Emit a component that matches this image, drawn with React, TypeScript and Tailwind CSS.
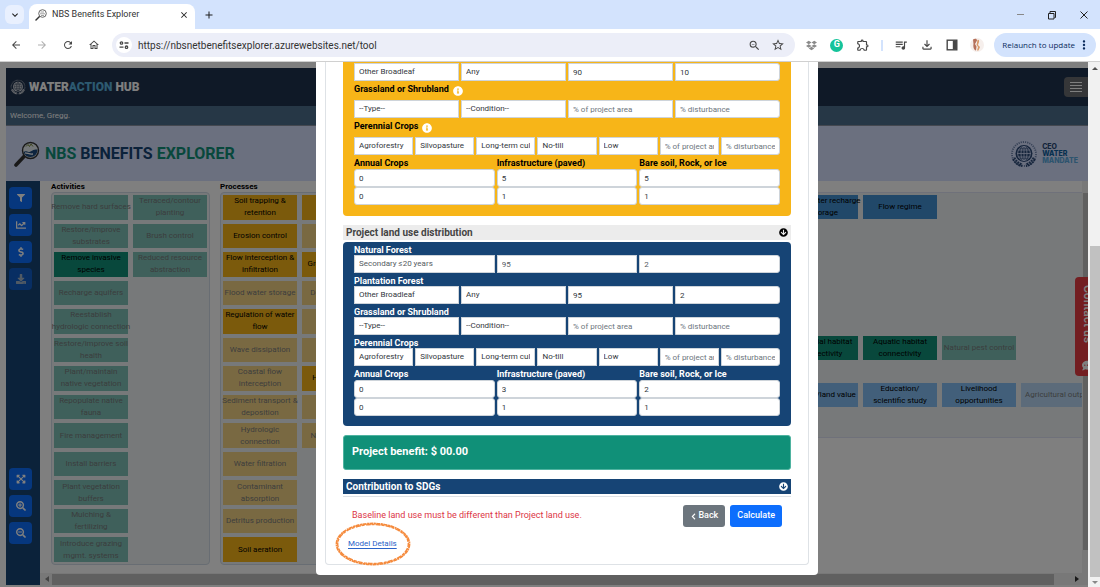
import type { ReactNode } from "react";
import clsx from "clsx";
import {
  FaArrowCircleDown,
  FaChartLine,
  FaChevronLeft,
  FaCommentDots,
  FaDollarSign,
  FaDownload,
  FaDropbox,
  FaExpandArrowsAlt,
  FaFilter,
  FaInfoCircle,
  FaSearchMinus,
  FaSearchPlus,
} from "react-icons/fa";
import {
  MdAdd,
  MdArrowBack,
  MdArrowForward,
  MdClose,
  MdExpandMore,
  MdMoreVert,
  MdOutlineExtension,
  MdOutlineFileDownload,
  MdOutlineHome,
  MdOutlineQueueMusic,
  MdRefresh,
  MdStarBorder,
  MdZoomOut,
} from "react-icons/md";

type Tone = "green" | "yellow" | "blue" | "sky";
type Tile = { text: string; on?: boolean };

const on = (text: string): Tile => ({ text, on: true });
const off = (text: string): Tile => ({ text });

const ACTIVITIES: Tile[] = [
  off("Remove hard surfaces"),
  off("Restore/improve\nsubstrates"),
  on("Remove invasive\nspecies"),
  off("Recharge aquifers"),
  off("Reestablish\nhydrologic connection"),
  off("Restore/improve soil\nhealth"),
  off("Plant/maintain\nnative vegetation"),
  off("Repopulate native\nfauna"),
  off("Fire management"),
  off("Install barriers"),
  off("Plant vegetation\nbuffers"),
  off("Mulching &\nfertilizing"),
  off("Introduce grazing\nmgmt. systems"),
  off("Terraced/contour\nplanting"),
  off("Brush control"),
  off("Reduced resource\nabstraction"),
];

const PROCESSES: Tile[] = [
  on("Soil trapping &\nretention"),
  on("Erosion control"),
  on("Flow interception &\ninfiltration"),
  off("Flood water storage"),
  on("Regulation of water\nflow"),
  off("Wave dissipation"),
  off("Coastal flow\ninterception"),
  off("Sediment transport &\ndeposition"),
  off("Hydrologic\nconnection"),
  off("Water filtration"),
  off("Contaminant\nabsorption"),
  off("Detritus production"),
  on("Soil aeration"),
  on("Nutrient flow"),
  off("Predation"),
  on("Groundwater flow"),
  off("Debris transport"),
  off("Heat transfer"),
  off("Pollination"),
  on("Habitat access"),
  off("Filtration"),
  off("Native dispersal"),
];

const toneClass: Record<Tone, string> = {
  green: "bg-[#109078]",
  yellow: "bg-[#f7b518]",
  blue: "bg-[#4290d2]",
  sky: "bg-[#84bef4]",
};

const TileBox = ({ tile, tone }: { tile: Tile; tone: Tone }) => (
  <button
    className={clsx(
      "flex min-h-0 w-[74px] items-center justify-center text-center text-[8px] leading-[12px] whitespace-pre text-black",
      toneClass[tone],
      !tile.on && "opacity-50",
    )}
  >
    {tile.text}
  </button>
);

const Panel = ({
  title,
  tiles,
  tone,
  className,
}: {
  title: string;
  tiles: Tile[];
  tone: Tone;
  className?: string;
}) => (
  <section className={clsx("flex shrink-0 flex-col", className)}>
    <h2 className="h-[11px] text-[8px] leading-[12px] font-bold">{title}</h2>
    <div className="grid flex-1 auto-cols-[74px] grid-flow-col grid-rows-[repeat(13,minmax(0,1fr))] gap-x-[5px] gap-y-1 rounded-sm border border-[#d0dae6] bg-[#eff2f5] p-[2px]">
      {tiles.map((tile) => (
        <TileBox key={tile.text} tile={tile} tone={tone} />
      ))}
    </div>
  </section>
);

const OutcomeRow = ({ tiles, tone }: { tiles: Tile[]; tone: Tone }) => (
  <div className="flex h-6 gap-[5px]">
    {tiles.map((tile) => (
      <TileBox key={tile.text} tile={tile} tone={tone} />
    ))}
  </div>
);

const Magnifier = ({ className }: { className?: string }) => (
  <svg viewBox="0 0 26 26" className={className} aria-hidden="true">
    <path d="M2 24 10 15.5" stroke="#333" strokeWidth="3.6" strokeLinecap="round" />
    <circle cx="16.5" cy="9.5" r="8" fill="#e8eef2" stroke="#333" strokeWidth="1.4" />
    <path
      d="M9.5 11c3-2 4 1 7-.6 3-1.600 4-2.400 7-1.800 0 4.500-3 7.400-7 7.400-3.500 0-6-2-7-5z"
      fill="#1c4a80"
    />
    <path d="M11 11.800c3 0 4 1.800 8 1.200" stroke="#fff" fill="none" strokeWidth="1.300" />
    <path d="M12 5.500 14 3.500 15.500 5.500 17 3 19 5.500" stroke="#7a8a40" fill="none" />
  </svg>
);

// small variant of the magnifier used as the tab's favicon
const Favicon = () => (
  <svg viewBox="0 0 12 12" className="size-3" fill="none" aria-hidden="true">
    <path d="M1 11 4.500 7.500" stroke="#333" strokeWidth="1.500" strokeLinecap="round" />
    <circle cx="7.500" cy="4.500" r="3.800" fill="#fff" stroke="#555" strokeWidth=".9" />
    <path d="M5.500 3h3.500M5 4.800h5M6 6.500h3" stroke="#888" strokeWidth=".8" />
  </svg>
);

const Globe = ({ className, color, line }: { className?: string; color: string; line: string }) => (
  <svg viewBox="0 0 28 28" className={className} aria-hidden="true">
    <g fill="none" stroke={color}>
      <circle cx="14" cy="14" r="12" strokeWidth="1.800" strokeDasharray="1.200 1" opacity=".6" />
      <path
        d="M3 19c2 4 5 6.500 9 7M25 19c-2 4-5 6.500-9 7M4.500 17.500c1.500 3.500 4 5.800 8 7M23.500 17.500c-1.500 3.500-4 5.800-8 7"
        strokeWidth="1.800"
        strokeDasharray="2 .7"
      />
    </g>
    <circle cx="14" cy="13.500" r="8.500" fill={color} />
    <g fill="none" stroke={line} strokeWidth=".8">
      <ellipse cx="14" cy="13.500" rx="3" ry="7" />
      <ellipse cx="14" cy="13.500" rx="6.400" ry="7" />
      <path d="M14 6v15M7 13.500h14M8 10h12M8 17h12" />
    </g>
  </svg>
);

const BrowserChrome = () => (
  <header className="shrink-0">
    <div className="flex h-[29px] items-end bg-[#d3e3fd] text-[#1f1f1f]">
      <button
        aria-label="Search tabs"
        className="mb-[5px] ml-[5px] flex size-[19px] items-center justify-center rounded-md bg-[#e9f0fe]"
      >
        <MdExpandMore className="size-3" />
      </button>
      <div className="ml-[5px] flex h-[25px] w-[166px] items-center rounded-t-lg bg-white pr-[6px] pb-[3px] pl-[6px]">
        <Favicon />
        <span className="ml-[5px] flex-1 text-[9px] text-[#333]">NBS Benefits Explorer</span>
        <button aria-label="Close tab">
          <MdClose className="size-[10px]" />
        </button>
      </div>
      <button aria-label="New tab" className="mb-2 ml-2">
        <MdAdd className="size-3" />
      </button>
      <div className="ml-auto flex h-full items-center gap-[22px] pr-[11px]">
        <button aria-label="Minimize" className="flex w-[10px] justify-center">
          <span className="block h-px w-[7px] bg-[#888]" />
        </button>
        <button aria-label="Restore">
          <svg viewBox="0 0 10 10" className="size-[10px]" fill="none" stroke="#222">
            <path d="M1.500 3.500h5.500v5.500h-5.500zM3 3V1.500h5.500v6H7.500" />
          </svg>
        </button>
        <button aria-label="Close window">
          <svg viewBox="0 0 10 10" className="size-[10px]" stroke="#222">
            <path d="M1.500 1.500l7 7M8.500 1.500l-7 7" />
          </svg>
        </button>
      </div>
    </div>
    <div className="flex h-[33px] items-center border-b border-[#d0d0d0] bg-white pr-1 pl-[10px] text-[#474747]">
      <div className="flex gap-[14px]">
        <button aria-label="Back one page">
          <MdArrowBack className="size-3" />
        </button>
        <button aria-label="Forward" className="text-[#b0b0b0]">
          <MdArrowForward className="size-3" />
        </button>
        <button aria-label="Reload">
          <MdRefresh className="size-3" />
        </button>
        <button aria-label="Home">
          <MdOutlineHome className="size-3" />
        </button>
      </div>
      <div className="ml-[12px] flex h-6 min-w-0 flex-1 items-center rounded-full bg-[#eceef8] pr-[10px] pl-1">
        <span className="flex size-4 shrink-0 items-center justify-center rounded-full bg-white">
          <svg viewBox="0 0 10 10" className="size-[10px]" fill="none" stroke="#474747" strokeWidth="1.300">
            <circle cx="2.500" cy="3" r="1.200" />
            <path d="M5.500 3h4M.5 7.200h4" />
            <circle cx="7.500" cy="7.200" r="1.200" />
          </svg>
        </span>
        <input
          aria-label="Address"
          defaultValue="https://nbsnetbenefitsexplorer.azurewebsites.net/tool"
          className="ml-[6px] min-w-0 flex-1 bg-transparent text-[10px] text-[#333] outline-none"
        />
        <MdZoomOut className="size-[13px]" />
        <MdStarBorder className="ml-[10px] size-[14px]" />
      </div>
      <div className="ml-[11px] flex items-center gap-[13px]">
        <FaDropbox className="size-[11px] text-[#8a8a8a]" />
        <span className="flex size-[13px] items-center justify-center rounded-full bg-[#15c39a] text-[9px] font-bold text-white">
          G
        </span>
        <MdOutlineExtension className="size-[14px]" />
      </div>
      <span className="mx-[11px] h-[11px] w-[2px] bg-[#d3e3fd]" />
      <div className="flex items-center gap-3">
        <MdOutlineQueueMusic className="size-[14px]" />
        <MdOutlineFileDownload className="size-[14px]" />
        <svg viewBox="0 0 12 12" className="size-3">
          <rect x="1.200" y="1.200" width="9.600" height="9.600" fill="none" stroke="#474747" strokeWidth="1.400" />
          <path d="M6.800 1.500h4v9h-4z" fill="#474747" />
        </svg>
        <svg viewBox="0 0 14 14" className="size-[14px]">
          <circle cx="7" cy="7" r="7" fill="#f6efec" />
          <path d="M3 1.500c2-1.500 4-1 4 1L5 6l1.500 2.500L6 12.500C3.500 12 3 8 3.500 6z" fill="#b5705a" />
          <path d="M7.500 2c1-.5 2 0 1.500 2L8 7l2 2-1.500 3.500H7L8 9 6.500 7z" fill="#d99a6a" />
        </svg>
      </div>
      <button className="ml-[10px] flex h-6 items-center rounded-full bg-[#d3e3fd] pr-[5px] pl-2 font-['Open_Sans',sans-serif] text-[8px] whitespace-nowrap text-[#0a2a5c]">
        Relaunch to update
        <MdMoreVert className="ml-[2px] size-[14px]" />
      </button>
    </div>
  </header>
);

const SideButton = ({ label, children }: { label: string; children: ReactNode }) => (
  <button
    aria-label={label}
    className="flex h-[22px] w-[23px] items-center justify-center rounded-sm bg-[#0d6efd] text-[10px] text-white"
  >
    {children}
  </button>
);

const Workspace = () => (
  <div className="flex h-full flex-col bg-white p-[6px] pr-0 pb-[2px]">
    <div className="flex h-[38px] shrink-0 items-center justify-between bg-[#1e324e] pl-1">
      <div className="flex items-center gap-[3px] text-[12px] font-black text-white">
        <Globe className="size-4" color="#e4e6ea" line="#1e324e" />
        <span>
          WATER<span className="text-[#5ab4e0]">ACTION</span> HUB
        </span>
      </div>
      <button aria-label="Menu" className="flex h-5 w-6 items-center justify-center rounded-l-sm bg-[#6a6c70]">
        <svg viewBox="0 0 12 10" className="h-[10px] w-3" stroke="#fff">
          <path d="M0 .5h12M0 3.500h12M0 6.500h12M0 9.500h12" />
        </svg>
      </button>
    </div>
    <div className="h-[19px] shrink-0 bg-[#4c6e8c] pl-1 text-[8px] leading-[19px] text-white">
      Welcome, Gregg.
    </div>
    <div className="flex h-14 shrink-0 items-center justify-between border-t border-[#8890a0] bg-[#d6e0ff] pr-[10px] pl-2">
      <div className="flex items-center gap-[5px] text-[16px] font-bold">
        <Magnifier className="size-[26px]" />
        <h1 className="text-[#109078]">
          NBS <span className="text-[#164475]">BENEFITS</span> EXPLORER
        </h1>
      </div>
      <div className="flex items-center gap-1 font-['Inter',sans-serif] text-[7px] leading-[7px] font-extrabold">
        <Globe className="size-7" color="#2c4a78" line="#d6e0ff" />
        <p className="text-[#2c4a78]">
          CEO
          <br />
          <span className="text-[#0e5f9e]">WATER</span>
          <br />
          <span className="text-[#5aa8dc]">MANDATE</span>
        </p>
      </div>
    </div>

    <div className="flex min-h-0 flex-1">
      <nav className="flex w-[34px] shrink-0 flex-col justify-between bg-[#164475] px-[3px] pt-[6px] pb-[41px]">
        <div className="flex flex-col gap-[5px]">
          <SideButton label="Filter">
            <FaFilter className="size-2" />
          </SideButton>
          <SideButton label="Charts">
            <FaChartLine />
          </SideButton>
          <SideButton label="Benefits">
            <FaDollarSign />
          </SideButton>
          <div className="opacity-60">
            <SideButton label="Download">
              <FaDownload />
            </SideButton>
          </div>
        </div>
        <div className="flex flex-col gap-[5px]">
          <SideButton label="Fit to screen">
            <FaExpandArrowsAlt />
          </SideButton>
          <SideButton label="Zoom in">
            <FaSearchPlus />
          </SideButton>
          <SideButton label="Zoom out">
            <FaSearchMinus />
          </SideButton>
        </div>
      </nav>
      <div className="flex min-w-0 flex-1 flex-col">
        <div className="flex min-h-0 flex-1">
          <div className="flex min-w-0 flex-1 items-stretch overflow-hidden pb-[8px] pl-[11px]">
            <Panel title="Activities" tiles={ACTIVITIES} tone="green" className="mr-[10px]" />
            <Panel title="Processes" tiles={PROCESSES} tone="yellow" />
            <div className="mt-[11px] -mr-[16px] ml-auto flex h-[246px] shrink-0 flex-col border border-[#dfe3f4] bg-[#eff2f5] p-[2px]">
              <OutcomeRow tone="blue" tiles={[on("Groundwater recharge\n& storage"), on("Flow regime")]} />
              <div className="mt-[117px]">
                <OutcomeRow
                  tone="green"
                  tiles={[
                    on("Terrestrial habitat\nconnectivity"),
                    on("Aquatic habitat\nconnectivity"),
                    off("Natural pest control"),
                  ]}
                />
              </div>
              <div className="mt-[23px]">
                <OutcomeRow
                  tone="sky"
                  tiles={[
                    on("Property/land value"),
                    on("Education/\nscientific study"),
                    on("Livelihood\nopportunities"),
                    off("Agricultural output"),
                  ]}
                />
              </div>
            </div>
          </div>
          <div className="flex w-[6px] flex-col items-center overflow-hidden bg-[#f1f1f1] pt-3 pb-[23px]">
            <div className="w-[5px] flex-1 self-end bg-[#c1c1c1]" />
          </div>
        </div>
        <div className="flex h-3 shrink-0 items-center bg-[#f1f1f1] pr-[9px] pl-[5px]">
          <svg viewBox="0 0 4 6" className="h-[6px] w-1" fill="#888">
            <path d="M4 0v6L0 3z" />
          </svg>
          <div className="mr-[21px] ml-[3px] h-[11px] flex-1 bg-[#c1c1c1]" />
          <svg viewBox="0 0 4 6" className="h-[6px] w-1" fill="#333">
            <path d="M0 0v6l4-3z" />
          </svg>
        </div>
      </div>
    </div>
  </div>
);

type Field = { name: string; value?: string; hint?: string; options?: boolean; soft?: boolean };

const FieldRow = ({ fields, group, cols }: { fields: Field[]; group: string; cols: string }) => (
  <div className={clsx("grid gap-[2px]", cols)}>
    {fields.map((field, i) => {
      const label = `${group} ${field.name}`;
      const style = clsx(
        "h-[18px] w-full min-w-0 appearance-none border border-[#ced4da] bg-white px-1 text-[8px] outline-none placeholder:text-[#6c757d] placeholder:opacity-100",
        field.soft ? "text-[#555b61]" : "text-[#32373c]",
        i === fields.length - 1 && "rounded-r-[3px]",
      );
      return field.options ? (
        <select key={label} aria-label={label} className={style}>
          <option>{field.value}</option>
        </select>
      ) : (
        <input
          key={label}
          aria-label={label}
          defaultValue={field.value}
          placeholder={field.hint}
          className={style}
        />
      );
    })}
  </div>
);

const GroupLabel = ({ children, info }: { children: string; info?: boolean }) => (
  <div
    className={clsx(
      "flex text-[9px] font-bold",
      info ? "h-[19px] gap-1 leading-[17px]" : "h-[13px] leading-[16px]",
    )}
  >
    <span>{children}</span>
    {info && <FaInfoCircle className="mt-[5px] size-[10px] text-white" />}
  </div>
);

const plantation = (area: string, disturbance: string): Field[] => [
  { name: "type", value: "Other Broadleaf", options: true },
  { name: "condition", value: "Any", options: true },
  { name: "area", value: area },
  { name: "disturbance", value: disturbance },
];

const GRASSLAND: Field[] = [
  { name: "type", value: "--Type--", options: true },
  { name: "condition", value: "--Condition--", options: true },
  { name: "area", hint: "% of project area" },
  { name: "disturbance", hint: "% disturbance" },
];

const PERENNIAL: Field[] = [
  { name: "system", value: "Agroforestry", options: true },
  { name: "practice", value: "Silvopasture", options: true },
  { name: "duration", value: "Long-term cultivated", options: true },
  { name: "tillage", value: "No-till", options: true },
  { name: "input", value: "Low", options: true },
  { name: "area", hint: "% of project area" },
  { name: "disturbance", hint: "% disturbance" },
];

const OTHER_USES = ["Annual Crops", "Infrastructure (paved)", "Bare soil, Rock, or Ice"];

const OtherUses = ({ id, values }: { id: string; values: string[][] }) => (
  <div className="grid grid-cols-3 gap-x-[2px]">
    {OTHER_USES.map((name, col) => (
      <div key={name} className="flex flex-col">
        <label htmlFor={`${id}-${col}`} className="h-[14px] text-[9px] leading-[16px] font-bold">
          {name}
        </label>
        {values[col].map((value, row) => (
          <input
            key={row}
            id={row === 0 ? `${id}-${col}` : undefined}
            aria-label={row === 0 ? undefined : `${name} disturbance`}
            defaultValue={value}
            className="h-[18px] w-full rounded-[3px] border border-[#ced4da] bg-white px-1 text-[8px] text-[#32373c] outline-none"
          />
        ))}
      </div>
    ))}
  </div>
);

const LandUseModal = () => (
  <div role="dialog" aria-label="Land use" className="w-full max-w-[502px] self-start rounded-b bg-white px-[9px] pb-[10px]">
    <div className="rounded-b border border-t-0 border-[#dee2e6] px-[17px]">
      <div className="rounded-b bg-[#f7b518] px-[11px] pt-px pb-[11px] text-black">
        <FieldRow group="Baseline plantation" cols="grid-cols-4" fields={plantation("90", "10")} />
        <GroupLabel info>Grassland or Shrubland</GroupLabel>
        <FieldRow group="Baseline grassland" cols="grid-cols-4" fields={GRASSLAND} />
        <GroupLabel info>Perennial Crops</GroupLabel>
        <FieldRow group="Baseline perennial" cols="grid-cols-7" fields={PERENNIAL} />
        <OtherUses
          id="baseline"
          values={[
            ["0", "0"],
            ["5", "1"],
            ["5", "1"],
          ]}
        />
      </div>

      <h3 className="mt-[9px] flex h-[15px] items-center justify-between bg-[#ececec] px-[3px] text-[10px] font-bold text-[#444]">
        Project land use distribution
        <FaArrowCircleDown className="size-[9px] text-black" />
      </h3>

      <div className="mt-[2px] rounded bg-[#164475] px-[11px] pb-[10px] text-white">
        <GroupLabel>Natural Forest</GroupLabel>
        <FieldRow
          group="Project natural forest"
          cols="grid-cols-3"
          fields={[
            { name: "type", value: "Secondary ≤20 years", options: true, soft: true },
            { name: "area", value: "95", soft: true },
            { name: "disturbance", value: "2", soft: true },
          ]}
        />
        <GroupLabel>Plantation Forest</GroupLabel>
        <FieldRow group="Project plantation" cols="grid-cols-4" fields={plantation("95", "2")} />
        <GroupLabel>Grassland or Shrubland</GroupLabel>
        <FieldRow group="Project grassland" cols="grid-cols-4" fields={GRASSLAND} />
        <GroupLabel>Perennial Crops</GroupLabel>
        <FieldRow group="Project perennial" cols="grid-cols-7" fields={PERENNIAL} />
        <OtherUses
          id="project"
          values={[
            ["0", "0"],
            ["3", "1"],
            ["2", "1"],
          ]}
        />
      </div>

      <div className="mt-[9px] flex h-[35px] items-center rounded-[3px] border border-[#4fb3a0] bg-[#109078] px-2 text-[11px] font-bold text-white">
        Project benefit: $ 00.00
      </div>

      <h3 className="mt-[9px] flex h-[15px] items-center justify-between bg-[#164475] px-[3px] text-[10px] font-bold text-white">
        Contribution to SDGs
        <FaArrowCircleDown className="size-[9px]" />
      </h3>
      <hr className="mt-[2px] border-[#dee2e6]" />

      <div className="mt-2 flex items-center px-[9px]">
        <p className="flex-1 text-[9px] text-[#dc3545]">
          Baseline land use must be different than Project land use.
        </p>
        <button className="flex h-[22px] items-center gap-px rounded-[3px] bg-[#6c757d] px-[7px] text-[9px] font-medium text-white">
          <FaChevronLeft className="size-[7px]" />
          Back
        </button>
        <button className="ml-[5px] h-[22px] rounded-[3px] bg-[#0d6efd] px-[7px] text-[9px] font-medium text-white">
          Calculate
        </button>
      </div>
      <div className="mt-[10px] pb-[14px] pl-[5px] text-[8px] leading-[13px]">
        <div className="relative inline-block">
          <a href="#model-details" className="text-[#2a62c8] underline underline-offset-2">
            Model Details
          </a>
          <svg
            viewBox="0 0 76 44"
            fill="none"
            stroke="#f58a3c"
            className="pointer-events-none absolute -top-[15px] -left-[13px] h-11 w-[76px] max-w-none"
          >
            <ellipse cx="38" cy="22" rx="36.500" ry="20.500" strokeWidth="1.800" strokeDasharray="4 .6 2 .4" />
            <ellipse cx="38" cy="22" rx="35.300" ry="19.500" strokeWidth="1.400" strokeDasharray="3 1.200 5 .8" />
          </svg>
        </div>
      </div>
    </div>
  </div>
);

const App = () => (
  <div className="flex h-screen flex-col overflow-hidden font-['Roboto',sans-serif] text-black">
    <BrowserChrome />
    <main className="flex min-h-0 flex-1">
      <div className="relative min-w-0 flex-1 overflow-hidden">
        <Workspace />
        <button className="absolute top-[215px] -right-[12px] flex h-[99px] w-[25px] items-center justify-between rounded-l-sm bg-[#e63c42] pt-[8px] pb-[5px] text-[12px] font-medium text-white [writing-mode:vertical-rl]">
          Contact us
          <FaCommentDots className="size-[11px]" />
        </button>
        <div className="absolute inset-0 flex justify-center bg-black/50 pl-[46px]">
          <LandUseModal />
        </div>
      </div>
      <div className="flex w-3 shrink-0 flex-col items-center justify-between bg-[#f1f1f1] pt-[5px] pb-[3px] pl-px">
        <svg viewBox="0 0 6 3" className="h-[3px] w-[6px]" fill="#505050">
          <path d="M0 3h6L3 0z" />
        </svg>
        <div className="mt-auto mb-1 h-[64%] w-[10px] bg-[#c1c1c1]" />
        <svg viewBox="0 0 6 3" className="h-[3px] w-[6px]" fill="#888">
          <path d="M0 0h6L3 3z" />
        </svg>
      </div>
    </main>
  </div>
);

export default App;
